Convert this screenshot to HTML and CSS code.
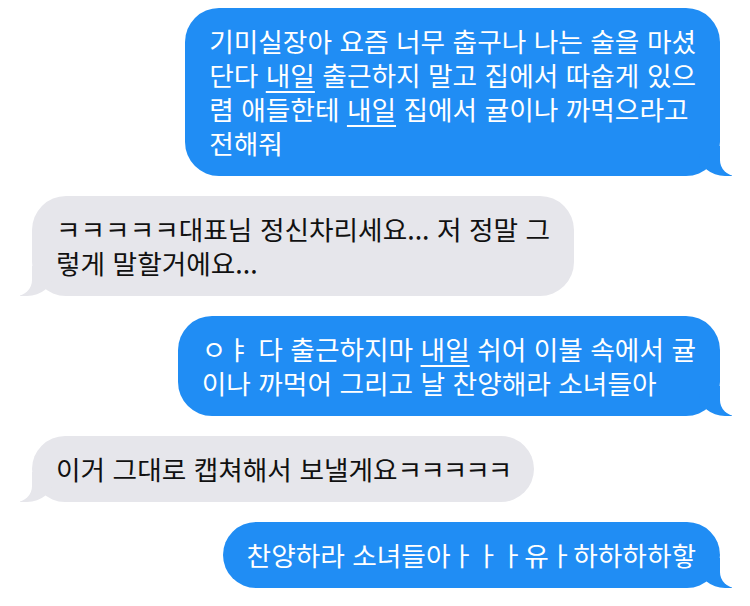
FILE: index.html
```html
<!DOCTYPE html>
<html lang="ko">
<head>
<meta charset="utf-8">
<link rel="stylesheet" href="styles.css">
</head>
<body>
<div class="chat">
  <div class="bubble me">기미실장아 요즘 너무 춥구나 나는 술을 마셨<br>단다 <u>내일</u> 출근하지 말고 집에서 따숩게 있으<br>렴 애들한테 <u>내일</u> 집에서 귤이나 까먹으라고<br>전해줘</div>
  <div class="bubble them">ㅋㅋㅋㅋㅋ대표님 정신차리세요... 저 정말 그<br>렇게 말할거에요...</div>
  <div class="bubble me">ㅇㅑ 다 출근하지마 <u>내일</u> 쉬어 이불 속에서 귤<br>이나 까먹어 그리고 날 찬양해라 소녀들아</div>
  <div class="bubble them">이거 그대로 캡쳐해서 보낼게요<span class="tight">ㅋㅋㅋㅋㅋ</span></div>
  <div class="bubble me">찬양하라 소녀들아ㅏㅏㅏ유ㅏ하하하하핳</div>
</div>
</body>
</html>
```

FILE: styles.css
```css
html, body {
  margin: 0;
  padding: 0;
  background: #ffffff;
}

.chat {
  display: flex;
  flex-direction: column;
  gap: 20px;
  padding: 8px 30px 0 32px;
  font-family: "Noto Sans CJK KR", "Noto Sans", sans-serif;
}

.bubble {
  position: relative;
  width: fit-content;
  white-space: nowrap;
  padding: 16px 24px;
  border-radius: 34px;
  font-size: 26.7px;
  line-height: 34px;
}

.bubble u {
  text-decoration-thickness: 2px;
  text-underline-offset: 5px;
}

.tight {
  letter-spacing: -2px;
}

.me {
  align-self: flex-end;
  background: #208df4;
  color: #ffffff;
}

.them {
  align-self: flex-start;
  background: #e6e6eb;
  color: #111111;
}

.bubble::before,
.bubble::after {
  content: "";
  position: absolute;
  bottom: 0;
  height: 30px;
}

.me::before {
  right: -12px;
  width: 33px;
  background: #208df4;
  border-bottom-left-radius: 26px 22px;
}

.me::after {
  right: -42px;
  width: 42px;
  background: #ffffff;
  border-bottom-left-radius: 16px;
}

.them::before {
  left: -12px;
  width: 33px;
  background: #e6e6eb;
  border-bottom-right-radius: 26px 22px;
}

.them::after {
  left: -42px;
  width: 42px;
  background: #ffffff;
  border-bottom-right-radius: 16px;
}
```
